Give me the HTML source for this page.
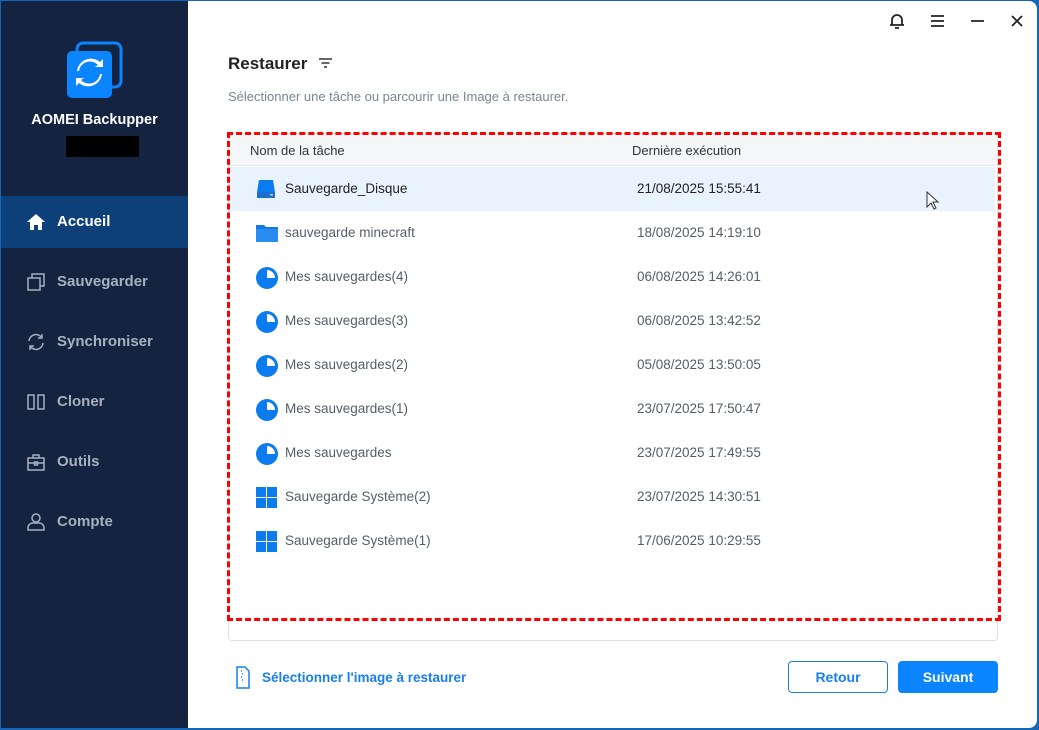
<!DOCTYPE html>
<html><head><meta charset="utf-8"><style>
*{margin:0;padding:0;box-sizing:border-box}
body{width:1039px;height:730px;overflow:hidden;background:#1565b8;font-family:"Liberation Sans",sans-serif;position:relative}
#win{position:absolute;left:1px;top:1px;width:1036px;height:727px;background:#fff;border-radius:0 8px 8px 0;overflow:hidden}
#side{position:absolute;left:0;top:0;width:187px;height:727px;background:#14233f}
.nav{position:absolute;left:0;width:187px;height:52px;color:#a7b0c0;font-size:15px;font-weight:bold;line-height:52px;padding-left:56px}
.nav svg{position:absolute;left:25px;top:16px}
.row{position:absolute;left:228px;width:766px;height:44px;font-size:13.5px;color:#555d6a;line-height:44px}
.row .n{position:absolute;left:56px}
.row .d{position:absolute;left:408px}
.row svg{position:absolute;left:27px;top:12px}
</style></head><body>
<div id="win">
<div id="side">
 <svg style="position:absolute;left:64px;top:40px" width="60" height="60" viewBox="0 0 60 60"><rect x="12" y="2" width="44" height="44" rx="6" fill="none" stroke="#0a84ff" stroke-width="3"/><rect x="2" y="10" width="45" height="47" rx="5" fill="#0a84ff"/><path d="M14 30a11 11 0 0 1 19-6l-3 2h8v-8l-3 3a14 14 0 0 0-23 9z M35 33a11 11 0 0 1-19 6l3-2h-8v8l3-3a14 14 0 0 0 23-9z" fill="#fff"/></svg>
 <div style="position:absolute;left:0;width:187px;top:111px;text-align:center;color:#fff;font-weight:bold;font-size:14.5px">AOMEI Backupper</div>
 <div style="position:absolute;left:65px;top:135px;width:73px;height:21px;background:#000"></div>
 <div class="nav" style="top:195px;background:#0d4079;color:#fff"><svg width="20" height="20" viewBox="0 0 20 20"><path d="M10 2L1 10h3v8h4v-5h4v5h4v-8h3z" fill="#fff"/></svg>Accueil</div>
 <div class="nav" style="top:255px"><svg width="20" height="20" viewBox="0 0 20 20" fill="none" stroke="#a7b0c0" stroke-width="1.5"><rect x="2" y="6" width="12" height="12"/><path d="M6 6V2h12v12h-4"/></svg>Sauvegarder</div>
 <div class="nav" style="top:315px"><svg width="20" height="20" viewBox="0 0 20 20" fill="none" stroke="#a7b0c0" stroke-width="1.5"><path d="M3 9a7 7 0 0 1 13-3M17 11a7 7 0 0 1-13 3M16 2v4h-4M4 18v-4h4"/></svg>Synchroniser</div>
 <div class="nav" style="top:375px"><svg width="20" height="20" viewBox="0 0 20 20" fill="none" stroke="#a7b0c0" stroke-width="1.5"><rect x="2" y="3" width="6" height="14"/><rect x="12" y="3" width="6" height="14"/></svg>Cloner</div>
 <div class="nav" style="top:435px"><svg width="20" height="20" viewBox="0 0 20 20" fill="none" stroke="#a7b0c0" stroke-width="1.5"><rect x="2" y="6" width="16" height="12"/><path d="M7 6V3h6v3M2 11h16"/><rect x="8.5" y="10" width="3" height="3"/></svg>Outils</div>
 <div class="nav" style="top:495px"><svg width="20" height="20" viewBox="0 0 20 20" fill="none" stroke="#a7b0c0" stroke-width="1.5"><circle cx="10" cy="6" r="4"/><path d="M2 18v-3a5 5 0 0 1 5-4h6a5 5 0 0 1 5 4v3z"/></svg>Compte</div>
</div>
<svg style="position:absolute;left:888px;top:12px" width="140" height="16" viewBox="0 0 140 16" fill="none" stroke="#222" stroke-width="1.8"><path d="M3 12V7a5 5 0 0 1 10 0v5zM1 12h14M6 15h4"/><path d="M42 3h13M42 8h13M42 13h13"/><path d="M82 8h13"/><path d="M123 3l10 10M133 3l-10 10"/></svg>
<div style="position:absolute;left:227px;top:53px;font-size:17px;font-weight:bold;color:#222">Restaurer</div>
<svg style="position:absolute;left:317px;top:56px" width="15" height="12" fill="none" stroke="#333" stroke-width="1.4"><path d="M1 2h13M3.5 6h8M6 10h3"/></svg>
<div style="position:absolute;left:227px;top:88px;font-size:13px;color:#7a8595">Sélectionner une tâche ou parcourir une Image à restaurer.</div>
<div style="position:absolute;left:227px;top:132px;width:770px;height:508px;border:1px solid #dde1e6;border-radius:4px"></div>
<div style="position:absolute;left:228px;top:133px;width:768px;height:32px;background:#f5f6f8;border-bottom:1px solid #e6e8ec"></div>
<div style="position:absolute;left:249px;top:142px;font-size:13px;color:#333">Nom de la tâche</div>
<div style="position:absolute;left:631px;top:142px;font-size:13px;color:#333">Dernière exécution</div>
<div class="row" style="top:166px;background:#e8f3fd;color:#222"><svg width="20" height="20" viewBox="0 0 20 20"><path d="M3 1h14l2 12v6H1v-6z" fill="#0a7cf0"/><rect x="1" y="13" width="18" height="6" fill="#1e6fd0"/><rect x="14" y="15" width="3" height="1.5" fill="#bcd"/></svg><span class="n">Sauvegarde_Disque</span><span class="d">21/08/2025 15:55:41</span></div>
<div class="row" style="top:210px"><svg width="22" height="20" viewBox="0 0 22 20"><path d="M0 2h8l2 2h12v15H0z" fill="#1578e0"/><rect x="0" y="6" width="22" height="13" fill="#2a8bf0"/></svg><span class="n">sauvegarde minecraft</span><span class="d">18/08/2025 14:19:10</span></div>
<div class="row" style="top:254px"><svg width="22" height="22" viewBox="0 0 22 22"><circle cx="11" cy="11" r="11" fill="#0a7cf0"/><path d="M11 3a8 8 0 0 1 8 8h-8z" fill="#fff"/></svg><span class="n">Mes sauvegardes(4)</span><span class="d">06/08/2025 14:26:01</span></div>
<div class="row" style="top:298px"><svg width="22" height="22" viewBox="0 0 22 22"><circle cx="11" cy="11" r="11" fill="#0a7cf0"/><path d="M11 3a8 8 0 0 1 8 8h-8z" fill="#fff"/></svg><span class="n">Mes sauvegardes(3)</span><span class="d">06/08/2025 13:42:52</span></div>
<div class="row" style="top:342px"><svg width="22" height="22" viewBox="0 0 22 22"><circle cx="11" cy="11" r="11" fill="#0a7cf0"/><path d="M11 3a8 8 0 0 1 8 8h-8z" fill="#fff"/></svg><span class="n">Mes sauvegardes(2)</span><span class="d">05/08/2025 13:50:05</span></div>
<div class="row" style="top:386px"><svg width="22" height="22" viewBox="0 0 22 22"><circle cx="11" cy="11" r="11" fill="#0a7cf0"/><path d="M11 3a8 8 0 0 1 8 8h-8z" fill="#fff"/></svg><span class="n">Mes sauvegardes(1)</span><span class="d">23/07/2025 17:50:47</span></div>
<div class="row" style="top:430px"><svg width="22" height="22" viewBox="0 0 22 22"><circle cx="11" cy="11" r="11" fill="#0a7cf0"/><path d="M11 3a8 8 0 0 1 8 8h-8z" fill="#fff"/></svg><span class="n">Mes sauvegardes</span><span class="d">23/07/2025 17:49:55</span></div>
<div class="row" style="top:474px"><svg width="21" height="21" viewBox="0 0 21 21" fill="#0a7cf0"><rect width="10" height="10"/><rect x="11" width="10" height="10"/><rect y="11" width="10" height="10"/><rect x="11" y="11" width="10" height="10"/></svg><span class="n">Sauvegarde Système(2)</span><span class="d">23/07/2025 14:30:51</span></div>
<div class="row" style="top:518px"><svg width="21" height="21" viewBox="0 0 21 21" fill="#0a7cf0"><rect width="10" height="10"/><rect x="11" width="10" height="10"/><rect y="11" width="10" height="10"/><rect x="11" y="11" width="10" height="10"/></svg><span class="n">Sauvegarde Système(1)</span><span class="d">17/06/2025 10:29:55</span></div>
<svg style="position:absolute;left:925px;top:190px" width="14" height="20" viewBox="0 0 14 20"><path d="M1 1v15l4-4 3 6 2-1-3-6h5z" fill="#fff" stroke="#333"/></svg>
<div style="position:absolute;left:226px;top:131px;width:774px;height:489px;border:3px dashed #f00"></div>
<svg style="position:absolute;left:235px;top:665px" width="14" height="23" viewBox="0 0 14 23" fill="none" stroke="#1a7fe8" stroke-width="1.5"><path d="M1 1h8l4 4v17H1z"/><path d="M5 5h1M6 8h1M5 11h1M6 14h1"/></svg>
<div style="position:absolute;left:261px;top:669px;font-size:13.5px;font-weight:bold;color:#1a7fe8">Sélectionner l'image à restaurer</div>
<div style="position:absolute;left:787px;top:660px;width:100px;height:32px;border:1px solid #1a7fe8;border-radius:4px;color:#1a7fe8;font-weight:bold;font-size:14px;text-align:center;line-height:30px">Retour</div>
<div style="position:absolute;left:897px;top:660px;width:100px;height:32px;background:#0a84ff;border-radius:4px;color:#fff;font-weight:bold;font-size:14px;text-align:center;line-height:32px">Suivant</div>
</div>
</body></html>
